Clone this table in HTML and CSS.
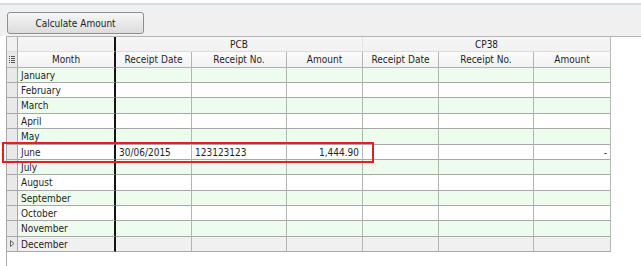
FILE: index.html
```html
<!DOCTYPE html>
<html>
<head>
<meta charset="utf-8">
<title>Tax Receipts</title>
<link rel="stylesheet" href="styles.css">
</head>
<body>
  <div class="toolbar">
    <button class="btn">Calculate Amount</button>
  </div>
  <div class="panel">
    <div class="grid">
      <!-- band header -->
      <div class="c rh hd1"></div>
      <div class="c month hd1"></div>
      <div class="c hd1 band pcb">PCB</div>
      <div class="c hd1 band last">CP38</div>
      <!-- column header -->
      <div class="c rh hd2"><svg class="colicon" width="6" height="7" viewBox="0 0 6 7"><path d="M0 0.5h1M2 0.5h4M0 2.5h1M2 2.5h4M0 4.5h1M2 4.5h4M0 6.5h1M2 6.5h4" stroke="#555" stroke-width="1"/></svg></div>
      <div class="c month hd2 ctr">Month</div>
      <div class="c hd2 ctr">Receipt Date</div>
      <div class="c hd2 ctr">Receipt No.</div>
      <div class="c hd2 ctr">Amount</div>
      <div class="c hd2 ctr">Receipt Date</div>
      <div class="c hd2 ctr">Receipt No.</div>
      <div class="c hd2 ctr last">Amount</div>

      <div class="c rh"></div><div class="c month g">January</div><div class="c g"></div><div class="c g"></div><div class="c g"></div><div class="c g"></div><div class="c g"></div><div class="c g last"></div>
      <div class="c rh"></div><div class="c month">February</div><div class="c"></div><div class="c"></div><div class="c"></div><div class="c"></div><div class="c"></div><div class="c last"></div>
      <div class="c rh"></div><div class="c month g">March</div><div class="c g"></div><div class="c g"></div><div class="c g"></div><div class="c g"></div><div class="c g"></div><div class="c g last"></div>
      <div class="c rh"></div><div class="c month">April</div><div class="c"></div><div class="c"></div><div class="c"></div><div class="c"></div><div class="c"></div><div class="c last"></div>
      <div class="c rh"></div><div class="c month g">May</div><div class="c g"></div><div class="c g"></div><div class="c g"></div><div class="c g"></div><div class="c g"></div><div class="c g last"></div>
      <div class="c rh"></div><div class="c month">June</div><div class="c">30/06/2015</div><div class="c">123123123</div><div class="c num">1,444.90</div><div class="c"></div><div class="c"></div><div class="c num last">-</div>
      <div class="c rh"></div><div class="c month g">July</div><div class="c g"></div><div class="c g"></div><div class="c g"></div><div class="c g"></div><div class="c g"></div><div class="c g last"></div>
      <div class="c rh"></div><div class="c month">August</div><div class="c"></div><div class="c"></div><div class="c"></div><div class="c"></div><div class="c"></div><div class="c last"></div>
      <div class="c rh"></div><div class="c month g">September</div><div class="c g"></div><div class="c g"></div><div class="c g"></div><div class="c g"></div><div class="c g"></div><div class="c g last"></div>
      <div class="c rh"></div><div class="c month">October</div><div class="c"></div><div class="c"></div><div class="c"></div><div class="c"></div><div class="c"></div><div class="c last"></div>
      <div class="c rh"></div><div class="c month g">November</div><div class="c g"></div><div class="c g"></div><div class="c g"></div><div class="c g"></div><div class="c g"></div><div class="c g last"></div>
      <div class="c rh"><svg class="cur" width="5" height="7" viewBox="0 0 5 7"><path d="M0.5 0.5L4 3.5L0.5 6.5Z" fill="none" stroke="#666" stroke-width="1"/></svg></div><div class="c month s">December</div><div class="c s"></div><div class="c s"></div><div class="c s"></div><div class="c s"></div><div class="c s"></div><div class="c s last"></div>
    </div>
  </div>
  <div class="mark"></div>
</body>
</html>
```

FILE: styles.css
```css
html, body {
  margin: 0;
  padding: 0;
  background: #ffffff;
}

body {
  position: relative;
  width: 641px;
  height: 266px;
  overflow: hidden;
  font-family: "DejaVu Sans Condensed", "DejaVu Sans", Verdana, sans-serif;
  font-stretch: condensed;
  font-size: 10px;
  color: #1e1e1e;
}

.toolbar {
  margin-top: 3px;
  height: 33px;
  box-sizing: border-box;
  border-top: 2px solid #d6dce6;
  background: #f0f0f0;
  padding: 7px 0 0 7px;
}

.btn {
  display: block;
  width: 137px;
  height: 22px;
  margin: 0;
  padding: 0;
  border: 1px solid #8f8f8f;
  border-radius: 3px;
  background: linear-gradient(#f7f7f7, #e9e9e9 50%, #dcdcdc);
  font-family: inherit;
  font-stretch: condensed;
  font-size: 10px;
  color: #1e1e1e;
}

.panel {
  margin-left: 6px;
  height: 230px;
  border-top: 1px solid #b4b4b4;
  border-left: 1px solid #a8a8a8;
}

.grid {
  display: grid;
  width: 604px;
  grid-template-columns: 11px 98px 76px 95px 76px 76px 95px 77px;
  grid-auto-rows: 15.36px;
}

.c {
  box-sizing: border-box;
  border-right: 1px solid #b4b4b4;
  border-bottom: 1px solid #a8a8a8;
  padding: 0 3px;
  line-height: 15px;
  white-space: nowrap;
  overflow: hidden;
  background: #ffffff;
}

.c.last {
  border-right-color: #b8b8b8;
}

.c.month {
  border-right: 2px solid #141414;
}

.c.g {
  background: #eefcee;
}

.c.s {
  background: #f0f0f0;
}

.c.rh {
  padding: 0;
  background: #e9e9e9;
  border-right-color: #a8a8a8;
  display: flex;
  align-items: center;
  justify-content: center;
}

.c.rh.hd1 {
  background: #f1f1f1;
}

.hd1 {
  background: linear-gradient(#f6f6f6, #f1f1f1);
  border-bottom-color: #dcdcdc;
  text-align: center;
}

.band {
  grid-column: span 3;
}

.band.pcb {
  border-right-color: #e4e4e4;
}

.hd2 {
  background: linear-gradient(#fbfbfb, #f2f2f2);
  border-bottom-color: #b0b0b0;
}

.ctr {
  text-align: center;
}

.num {
  text-align: right;
}

.colicon {
  display: block;
}

.cur {
  display: block;
}

/* highlight drawn over the June row */
.mark {
  position: absolute;
  left: 2px;
  top: 142px;
  width: 372px;
  height: 21px;
  box-sizing: border-box;
  border: 2px solid #e4201c;
}
```
